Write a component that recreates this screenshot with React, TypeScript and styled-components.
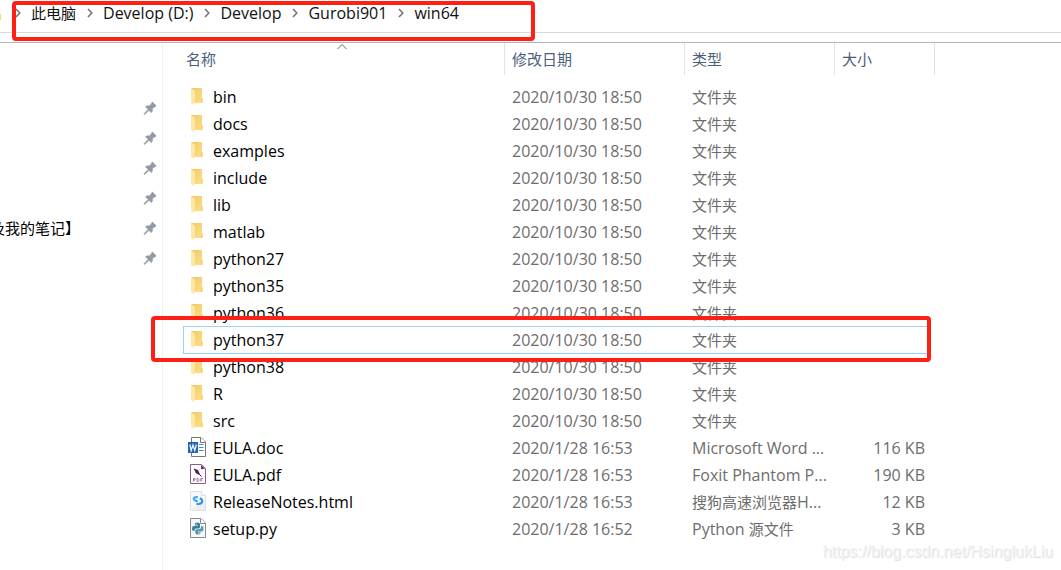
import React from "react";
import styled, { createGlobalStyle } from "styled-components";

const GlobalStyle = createGlobalStyle`
  *, *::before, *::after { box-sizing: border-box; }
  body {
    margin: 0;
    background: #fff;
    color: #111;
    font-family: "Open Sans", "Noto Sans CJK SC", sans-serif;
    font-size: 16px;
    line-height: 26px;
  }
  button { font: inherit; }
`;

const Page = styled.div`
  position: relative;
  display: flex;
  flex-direction: column;
  min-height: 100vh;
  overflow: hidden;
`;

const AddressBar = styled.nav`
  display: flex;
  align-items: center;
  height: 33px;
  padding: 0 0 6px 0;
  border-bottom: 1px solid #d9d9d9;
`;

const DriveEdge = styled.span`
  width: 1px;
  height: 6px;
  margin-top: 8px;
  background: #ffd96a;
`;

const Crumbs = styled.ol`
  display: flex;
  align-items: center;
  margin: 0;
  padding: 0 0 0 3px;
  list-style: none;
`;

const Crumb = styled.li`
  display: flex;
  align-items: center;
`;

const CrumbChevron = styled.svg`
  width: 6px;
  height: 10px;
  margin: 0 10px 0 11px;
`;

const CrumbButton = styled.button`
  padding: 0;
  border: 0;
  background: none;
  color: #111;
`;

const Cjk = styled.span`
  font-size: 15px;
`;

const Body = styled.div`
  display: flex;
  flex: 1;
  margin-top: 9px;
  border-top: 1px solid #b4b4b4;
`;

const Sidebar = styled.aside`
  flex: none;
  width: 163px;
  border-right: 1px solid #f0f0f0;
`;

const PinList = styled.ul`
  margin: 0;
  padding: 50px 5px 0 0;
  list-style: none;
`;

const PinItem = styled.li`
  display: flex;
  align-items: center;
  justify-content: space-between;
  height: 30px;
`;

const PinLabel = styled.span`
  display: flex;
  justify-content: flex-end;
  width: 80px;
  overflow: hidden;
  white-space: nowrap;
  color: #000;
  font-size: 15px;
`;

const PinSvg = styled.svg`
  width: 14px;
  height: 14px;
`;

const Main = styled.main`
  flex: 1;
  min-width: 0;
  padding-left: 20px;
`;

const FileTable = styled.table`
  width: 752px;
  table-layout: fixed;
  border-collapse: separate;
  border-spacing: 0;
`;

const Col = styled.col<{ $w: number }>`
  width: ${(p) => p.$w}px;
`;

const HeadCell = styled.th<{ $first?: boolean }>`
  position: relative;
  height: 32px;
  padding: 0 0 0 ${(p) => (p.$first ? 3 : 7)}px;
  border-right: 1px solid #e2e2e2;
  text-align: left;
  font-weight: 400;
`;

const SortButton = styled.button`
  display: block;
  padding: 0;
  border: 0;
  background: none;
  color: #4c607a;
  font-size: 15px;
`;

const SortMark = styled.svg`
  position: absolute;
  top: 0;
  left: 50%;
  width: 12px;
  height: 8px;
  margin-left: -8px;
`;

const HeadGap = styled.td`
  height: 8px;
  padding: 0;
`;

const Row = styled.tr<{ $selected?: boolean }>`
  ${(p) =>
    p.$selected &&
    `
    td { box-shadow: inset 0 1px #99d1ff, 0 1px #99d1ff; }
    td:first-child { box-shadow: inset 1px 1px #99d1ff, 0 1px #99d1ff; }
    td:last-child { box-shadow: none; }
  `}
`;

const Cell = styled.td<{ $right?: boolean }>`
  height: 27px;
  padding: 0 ${(p) => (p.$right ? 5 : 0)}px 0 7px;
  color: #6d6d6d;
  white-space: nowrap;
  text-align: ${(p) => (p.$right ? "right" : "left")};
`;

const NameCell = styled(Cell)`
  padding-left: 4px;
  color: #000;
`;

const NameBox = styled.div`
  display: flex;
  align-items: center;
  gap: 6px;
`;

const FileSvg = styled.svg`
  flex: none;
  width: 20px;
  height: 21px;
`;

const Highlight = styled.div<{ $x: number; $y: number; $w: number; $h: number }>`
  position: absolute;
  left: ${(p) => p.$x}px;
  top: ${(p) => p.$y}px;
  width: ${(p) => p.$w}px;
  height: ${(p) => p.$h}px;
  border: 4px solid #ff2015;
  border-radius: 4px;
  pointer-events: none;
`;

const Watermark = styled.span`
  position: absolute;
  right: 8px;
  bottom: 8px;
  color: #f4f4f4;
  font-family: "Liberation Sans", sans-serif;
  font-size: 16px;
  line-height: 20px;
  text-shadow: 1px 1px 1px #dcdcdc;
`;

type Kind = "folder" | "doc" | "pdf" | "html" | "py";

function FileIcon({ kind }: { kind: Kind }) {
  if (kind === "folder") {
    return (
      <FileSvg viewBox="0 0 20 21" aria-hidden="true">
        <defs>
          <linearGradient id="folderBack" x1="0" x2="1" y1="0" y2="1">
            <stop offset="0" stopColor="#eec966" />
            <stop offset="1" stopColor="#ffe08a" />
          </linearGradient>
        </defs>
        <path d="M4 2H15V12L16 13V17H4Z" fill="url(#folderBack)" />
        <path d="M4 2L8 5V16L7 19L4 17Z" fill="#ffe8a6" />
        <path d="M15 12L14.400 14V17" fill="none" stroke="#edc65c" strokeWidth=".6" />
      </FileSvg>
    );
  }
  if (kind === "doc") {
    return (
      <FileSvg viewBox="0 0 20 21" aria-hidden="true">
        <path d="M4.500 .500H14L18.500 5V19.500H4.500Z" fill="#fff" stroke="#777" />
        <path d="M13.500 .500V5.500H18.500" fill="#fff" stroke="#777" />
        <path d="M12 7.500H16.500M12 10.500H16.500M12 13.500H16.500" stroke="#4384d0" />
        <rect x="1" y="5" width="10" height="11" fill="#2066bf" />
        <path d="M2.800 7.500L4.200 13.500L6 8L7.800 13.500L9.400 7.500" fill="none" stroke="#fff" strokeWidth="1.200" />
      </FileSvg>
    );
  }
  if (kind === "pdf") {
    return (
      <FileSvg viewBox="0 0 20 21" aria-hidden="true">
        <path d="M3.500 .500H14.500L18.500 4.500V19.500H3.500Z" fill="#fff" stroke="#8a5c90" />
        <path d="M14 1V5H18Z" fill="#63266b" />
        <path d="M7 4.500L11 6L13.500 11.500L8.800 9.300Z" fill="#571b60" />
        <path d="M7 5L14.500 12.500" stroke="#571b60" />
        <path
          d="M6.500 17.500V14.500H8V16H6.500M10 14.500V17.500H11.200L12 16.500V15.500L11.200 14.500ZM13.800 17.500V14.500H16M13.800 16H15.500"
          fill="none"
          stroke="#8b5a90"
          strokeWidth=".8"
        />
      </FileSvg>
    );
  }
  if (kind === "html") {
    return (
      <FileSvg viewBox="0 0 20 21" aria-hidden="true">
        <path d="M3.500 .500H14.500L18.500 4.500V19.500H3.500Z" fill="#f7f8fa" stroke="#dde0e4" />
        <path d="M14.500 .500V4.500H18.500" fill="#fff" stroke="#dde0e4" />
        <path d="M4 19L18 9V19Z" fill="#eceef1" />
        <path
          d="M10.800 6.200C8 5.700 6.500 6.800 6.800 8.300C7.200 9.800 9.600 9.300 10.500 11"
          fill="none"
          stroke="#43a5f5"
          strokeWidth="2.200"
        />
        <path
          d="M12.800 7.200C15 8 15.700 9.700 14.900 11.400C14 13 12 13.300 9.500 12.700"
          fill="none"
          stroke="#2d92ec"
          strokeWidth="2.200"
        />
      </FileSvg>
    );
  }
  return (
    <FileSvg viewBox="0 0 20 21" aria-hidden="true">
      <path d="M3.500 .500H14L18.500 5V19.500H3.500Z" fill="#f7f8f8" stroke="#858a8c" />
      <path d="M13.500 .500V5.500H18.500" fill="#fff" stroke="#858a8c" />
      <path
        d="M8 5.500Q8 4.500 10.500 4.500T13 6V9Q13 10.500 11.500 10.500H9Q7.500 10.500 7.500 12V13H6.500Q5 13 5 10.500T6.500 8H11V7.500H8Z"
        fill="#3b7f9f"
      />
      <path
        d="M14 8H15Q16.500 8 16.500 10.500T15 13.500H11V14H13.500V15Q13.500 16.500 11 16.500T8.300 15V12.500Q8.300 11.300 9.500 11.300H12Q14 11.300 14 9.500Z"
        fill="#5496af"
      />
      <circle cx="9.500" cy="6" r=".6" fill="#fff" />
      <circle cx="12" cy="15.200" r=".6" fill="#fff" />
    </FileSvg>
  );
}

function PinIcon() {
  return (
    <PinSvg viewBox="0 0 14 14" aria-hidden="true">
      <path
        d="M9.300 1L13 4.700L12 6L11 6L9.300 7.800Q9.800 10 8.300 11.500L6 9.300L1.600 13.400L1 12.800L5.200 8.400L2.600 5.800Q4.200 4.300 6.300 5L8.400 3Z"
        fill="#929ba5"
        stroke="#929ba5"
        strokeWidth=".8"
        strokeLinejoin="round"
      />
    </PinSvg>
  );
}

/* Chinese runs are set one pixel smaller than the Latin text around them. */
function Mixed({ text }: { text: string }) {
  return (
    <>
      {text.split(/([\u4e00-\u9fff]+)/).map((part, i) =>
        i % 2 ? <Cjk key={i}>{part}</Cjk> : part
      )}
    </>
  );
}

interface FileEntry {
  name: string;
  date: string;
  type: string;
  size?: string;
  kind: Kind;
}

const folderNames = [
  "bin", "docs", "examples", "include", "lib", "matlab", "python27",
  "python35", "python36", "python37", "python38", "R", "src",
];

const files: FileEntry[] = [
  ...folderNames.map((name): FileEntry => ({
    name,
    date: "2020/10/30 18:50",
    type: "文件夹",
    kind: "folder",
  })),
  { name: "EULA.doc", date: "2020/1/28 16:53", type: "Microsoft Word ...", size: "116 KB", kind: "doc" },
  { name: "EULA.pdf", date: "2020/1/28 16:53", type: "Foxit Phantom P...", size: "190 KB", kind: "pdf" },
  { name: "ReleaseNotes.html", date: "2020/1/28 16:53", type: "搜狗高速浏览器H...", size: "12 KB", kind: "html" },
  { name: "setup.py", date: "2020/1/28 16:52", type: "Python 源文件", size: "3 KB", kind: "py" },
];

const path = ["此电脑", "Develop (D:)", "Develop", "Gurobi901", "win64"];
const pins = ["", "", "", "", "及我的笔记】", ""];

export default function App() {
  return (
    <Page>
      <GlobalStyle />
      <AddressBar>
        <DriveEdge />
        <Crumbs>
          {path.map((p, i) => (
            <Crumb key={i}>
              <CrumbChevron viewBox="0 0 6 10" aria-hidden="true">
                <path d="M1 1L4.800 5L1 9" fill="none" stroke="#777" strokeWidth="1.600" />
              </CrumbChevron>
              <CrumbButton type="button">
                <Mixed text={p} />
              </CrumbButton>
            </Crumb>
          ))}
        </Crumbs>
      </AddressBar>
      <Body>
        <Sidebar>
          <PinList>
            {pins.map((label, i) => (
              <PinItem key={i}>
                <PinLabel>{label}</PinLabel>
                <PinIcon />
              </PinItem>
            ))}
          </PinList>
        </Sidebar>
        <Main>
          <FileTable>
            <colgroup>
              <Col $w={322} />
              <Col $w={180} />
              <Col $w={150} />
              <Col $w={95} />
              <Col $w={5} />
            </colgroup>
            <thead>
              <tr>
                <HeadCell $first>
                  <SortButton type="button">名称</SortButton>
                  <SortMark viewBox="0 0 12 8" aria-hidden="true">
                    <path d="M1.500 6L6 1.500L10.500 6" fill="none" stroke="#666" />
                  </SortMark>
                </HeadCell>
                <HeadCell><SortButton type="button">修改日期</SortButton></HeadCell>
                <HeadCell><SortButton type="button">类型</SortButton></HeadCell>
                <HeadCell colSpan={2}><SortButton type="button">大小</SortButton></HeadCell>
              </tr>
            </thead>
            <tbody>
              <tr><HeadGap colSpan={5} /></tr>
              {files.map((f) => (
                <Row key={f.name} $selected={f.name === "python37"}>
                  <NameCell>
                    <NameBox>
                      <FileIcon kind={f.kind} />
                      {f.name}
                    </NameBox>
                  </NameCell>
                  <Cell>{f.date}</Cell>
                  <Cell><Mixed text={f.type} /></Cell>
                  <Cell $right>{f.size}</Cell>
                  <td />
                </Row>
              ))}
            </tbody>
          </FileTable>
        </Main>
      </Body>
      <Highlight $x={12} $y={1} $w={523} $h={40} />
      <Highlight $x={151} $y={316} $w={780} $h={46} />
      <Watermark>https://blog.csdn.net/HsinglukLiu</Watermark>
    </Page>
  );
}
